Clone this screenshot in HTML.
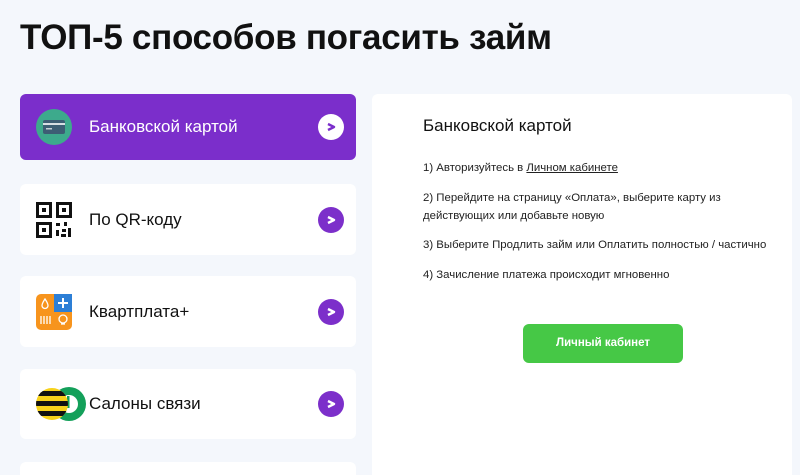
<!DOCTYPE html>
<html><head><meta charset="utf-8"><style>
*{margin:0;padding:0;box-sizing:border-box}
html,body{width:800px;height:475px;overflow:hidden}
body{background:#f4f7fc;font-family:"Liberation Sans","DejaVu Sans",sans-serif;position:relative;color:#111}
h1{position:absolute;left:20px;top:18px;font-size:35px;font-weight:bold;letter-spacing:-0.3px;color:#111}
.card{position:absolute;left:20px;width:336px;background:#fff;border-radius:6px}
.card .t{position:absolute;left:69px;font-size:17px;top:50%;transform:translateY(-50%);color:#111}
.arr{position:absolute;left:298px;top:50%;margin-top:-13px;width:26px;height:26px;border-radius:50%;background:#7c2fca}
.arr svg{position:absolute;left:8px;top:8px}
.ic{position:absolute;left:16px;top:50%;margin-top:-18px;width:36px;height:36px}
.panel{position:absolute;left:372px;top:94px;width:420px;height:381px;background:#fff;border-radius:6px 6px 0 0}
.panel h2{position:absolute;left:51px;top:22px;font-size:17px;font-weight:normal;color:#111}
.panel p{position:absolute;left:51px;font-size:11.4px;line-height:18px;color:#222}
.btn{position:absolute;left:151px;top:230px;width:160px;height:39px;background:#46c846;border-radius:6px;color:#fff;font-size:11.5px;font-weight:bold;text-align:center;line-height:39px}
</style></head><body>
<h1>ТОП-5 способов погасить займ</h1>

<div class="card" style="top:94px;height:66px;background:#7b2ecb">
 <svg class="ic" viewBox="0 0 36 36"><circle cx="18" cy="18" r="18" fill="#3daa8c"/><rect x="7" y="11" width="22" height="14" rx="2" fill="#3d5e74"/><rect x="7" y="14" width="22" height="2" fill="#fff" opacity=".8"/><rect x="10" y="19" width="6" height="1.5" fill="#fff" opacity=".7"/></svg>
 <div class="t" style="color:#fff">Банковской картой</div>
 <div class="arr" style="background:#fff"><svg width="10" height="10" viewBox="0 0 10 10"><path d="M2 2l6 3-6 3" fill="none" stroke="#7b2ecb" stroke-width="2.4" stroke-linejoin="round"/></svg></div>
</div>

<div class="card" style="top:184px;height:71px">
 <svg class="ic" viewBox="0 0 36 36"><g fill="none" stroke="#111" stroke-width="3"><rect x="1.5" y="1.5" width="13" height="13"/><rect x="21.5" y="1.5" width="13" height="13"/><rect x="1.5" y="21.5" width="13" height="13"/></g><rect x="6" y="6" width="4" height="4" fill="#111"/><rect x="26" y="6" width="4" height="4" fill="#111"/><rect x="6" y="26" width="4" height="4" fill="#111"/><path d="M20 21h4v3h-4zM28 20h3v4h-3zM20 28h3v6h-3zM26 27h4v3h-4zM32 26h3v9h-3zM25 32h5v3h-5z" fill="#111"/></svg>
 <div class="t">По QR-коду</div>
 <div class="arr"><svg width="10" height="10" viewBox="0 0 10 10"><path d="M2 2l6 3-6 3" fill="none" stroke="#fff" stroke-width="2.4" stroke-linejoin="round"/></svg></div>
</div>

<div class="card" style="top:276px;height:71px">
 <svg class="ic" viewBox="0 0 36 36"><rect width="36" height="36" rx="5" fill="#f7941d"/><rect x="18" y="0" width="18" height="18" fill="#2d7fd6"/><path d="M9 5c2 3 3 5 3 6.5a3 3 0 0 1-6 0C6 10 7 8 9 5z" fill="none" stroke="#fff" stroke-width="1.3"/><path d="M27 4v10M22 9h10" stroke="#fff" stroke-width="2"/><path d="M5 22v8M8 22v8M11 22v8M14 22v8" stroke="#fff" stroke-width="1.3"/><circle cx="27" cy="25" r="4" fill="none" stroke="#fff" stroke-width="1.3"/><path d="M25 30h4" stroke="#fff" stroke-width="1.3"/></svg>
 <div class="t">Квартплата+</div>
 <div class="arr"><svg width="10" height="10" viewBox="0 0 10 10"><path d="M2 2l6 3-6 3" fill="none" stroke="#fff" stroke-width="2.4" stroke-linejoin="round"/></svg></div>
</div>

<div class="card" style="top:369px;height:70px">
 <svg style="position:absolute;left:16px;top:17px" width="50" height="36" viewBox="0 0 50 36"><circle cx="33" cy="18" r="17" fill="#13a05a"/><circle cx="33" cy="18" r="9" fill="#fff"/><rect x="31" y="10" width="2.5" height="12" fill="#13a05a"/><clipPath id="c"><circle cx="16" cy="18" r="16"/></clipPath><g clip-path="url(#c)"><rect width="34" height="36" fill="#f7d21b"/><rect y="5" width="34" height="5" fill="#111"/><rect y="15" width="34" height="5" fill="#111"/><rect y="25" width="34" height="5" fill="#111"/></g></svg>
 <div class="t">Салоны связи</div>
 <div class="arr"><svg width="10" height="10" viewBox="0 0 10 10"><path d="M2 2l6 3-6 3" fill="none" stroke="#fff" stroke-width="2.4" stroke-linejoin="round"/></svg></div>
</div>

<div class="card" style="top:462px;height:13px;border-radius:6px 6px 0 0"></div>

<div class="panel">
 <h2>Банковской картой</h2>
 <p style="top:65px">1) Авторизуйтесь в <u>Личном кабинете</u></p>
 <p style="top:95px">2) Перейдите на страницу «Оплата», выберите карту из<br>действующих или добавьте новую</p>
 <p style="top:142px">3) Выберите Продлить займ или Оплатить полностью / частично</p>
 <p style="top:172px">4) Зачисление платежа происходит мгновенно</p>
 <div class="btn">Личный кабинет</div>
</div>
</body></html>
